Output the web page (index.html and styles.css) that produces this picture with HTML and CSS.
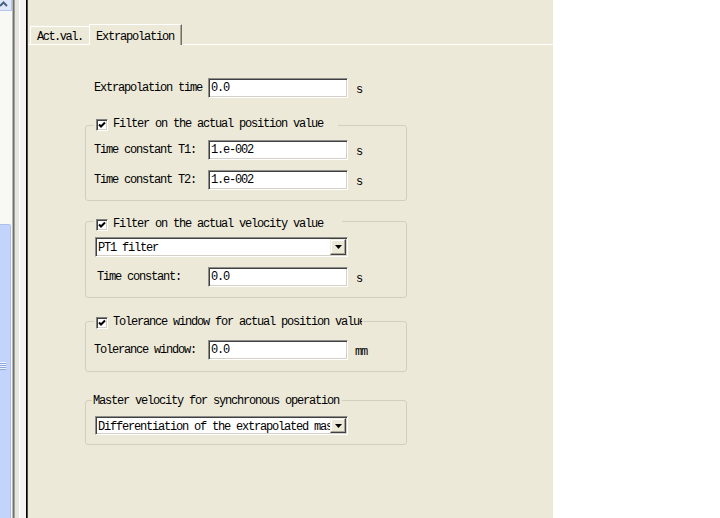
FILE: index.html
```html
<!DOCTYPE html>
<html>
<head>
<meta charset="utf-8">
<title>Extrapolation</title>
<link rel="stylesheet" href="styles.css">
</head>
<body>
<div class="screen">
  <div class="vscroll">
    <div class="sb-btn">
      <svg width="9" height="8" viewBox="0 0 9 8"><polyline points="1,6 4.5,2.5 8,6" fill="none" stroke="#4d6185" stroke-width="2"/></svg>
    </div>
    <div class="sb-track">
      <div class="sb-thumb"><div class="grip"></div></div>
    </div>
  </div>
  <div class="splitter"></div>
  <div class="panel">
    <div class="tabs">
      <div class="tab">Act.val.</div>
      <div class="tab active">Extrapolation</div>
    </div>
    <div class="page">
      <div class="content">
        <div class="row row-top">
          <span class="lbl">Extrapolation time</span>
          <span class="field">0.0</span>
          <span class="unit">s</span>
        </div>

        <div class="group g1">
          <div class="legend legend-1"><span class="check"><svg width="8" height="8" viewBox="0 0 8 8"><path d="M1 3.5 L3 5.5 L7 1.5" fill="none" stroke="#000" stroke-width="2"/></svg></span><span class="legend-text">Filter on the actual position value</span></div>
          <div class="row">
            <span class="lbl">Time constant T1:</span>
            <span class="field">1.e-002</span>
            <span class="unit">s</span>
          </div>
          <div class="row row-gap">
            <span class="lbl">Time constant T2:</span>
            <span class="field">1.e-002</span>
            <span class="unit">s</span>
          </div>
        </div>

        <div class="group g2">
          <div class="legend legend-2"><span class="check"><svg width="8" height="8" viewBox="0 0 8 8"><path d="M1 3.5 L3 5.5 L7 1.5" fill="none" stroke="#000" stroke-width="2"/></svg></span><span class="legend-text">Filter on the actual velocity value</span></div>
          <div class="combo combo-1">
            <span class="combo-text">PT1 filter</span>
            <span class="drop"><svg width="7" height="4" viewBox="0 0 7 4"><polygon points="0,0 7,0 3.5,4" fill="#000"/></svg></span>
          </div>
          <div class="row row-tc">
            <span class="lbl lbl-tc">Time constant:</span>
            <span class="field">0.0</span>
            <span class="unit">s</span>
          </div>
        </div>

        <div class="group g3">
          <div class="legend legend-3"><span class="check"><svg width="8" height="8" viewBox="0 0 8 8"><path d="M1 3.5 L3 5.5 L7 1.5" fill="none" stroke="#000" stroke-width="2"/></svg></span><span class="legend-text">Tolerance window for actual position value</span></div>
          <div class="row">
            <span class="lbl">Tolerance window:</span>
            <span class="field">0.0</span>
            <span class="unit unit-mm">mm</span>
          </div>
        </div>

        <div class="group g4">
          <div class="legend legend-4"><span class="legend-text">Master velocity for synchronous operation</span></div>
          <div class="combo combo-2">
            <span class="combo-text">Differentiation of the extrapolated master value</span>
            <span class="drop"><svg width="7" height="4" viewBox="0 0 7 4"><polygon points="0,0 7,0 3.5,4" fill="#000"/></svg></span>
          </div>
        </div>
      </div>
    </div>
  </div>
</div>
</body>
</html>
```

FILE: styles.css
```css
* { box-sizing: border-box; }
html, body { margin: 0; padding: 0; }
body {
  width: 720px;
  height: 518px;
  overflow: hidden;
  background: #ffffff;
  font-family: "Liberation Mono", "DejaVu Sans Mono", monospace;
  font-size: 12px;
  letter-spacing: -1.2px;
  line-height: 13px;
  color: #000;
}
.screen { display: flex; height: 518px; }

/* left scrollbar */
.vscroll {
  width: 12px;
  flex: none;
  display: flex;
  flex-direction: column;
  background: #f8f8f4;
}
.sb-btn {
  height: 11px;
  flex: none;
  background: #dfe7fb;
  border-right: 1px solid #b4c5ee;
  border-bottom: 1px solid #b4c5ee;
  display: flex;
  align-items: flex-start;
}
.sb-btn svg { display: block; margin-left: -1px; }
.sb-track { flex: 1; padding-top: 213px; display: flex; flex-direction: column; }
.sb-thumb {
  flex: 1;
  width: 11px;
  background: #c3d4fc;
  border-right: 1px solid #a9bdee;
  border-top: 1px solid #aebfec;
  border-radius: 0 2px 0 0;
  padding-top: 137px;
}
.grip {
  width: 6px;
  height: 8px;
  background: repeating-linear-gradient(to bottom, #eef3ff 0 1px, #8ca6e0 1px 2px);
}

.splitter {
  width: 16px;
  flex: none;
  background: linear-gradient(to right,
    #b9b9b2 0 1px, #6f6f6c 1px 2px, #a3a39d 2px 3px,
    #e6e5df 3px 7px, #ffffff 7px 8px, #f5f4f0 8px 14px,
    #000000 14px 15px, #4a4a48 15px 16px);
}

/* panel */
.panel {
  width: 525px;
  flex: none;
  background: #ece9d8;
  display: flex;
  flex-direction: column;
}
.tabs {
  margin-top: 24px;
  height: 21px;
  padding-left: 2px;
  display: flex;
  align-items: flex-end;
  border-bottom: 1px solid #ffffff;
}
.tab {
  height: 18px;
  width: 59px;
  border-top: 1px solid #ffffff;
  border-left: 1px solid #ffffff;
  padding: 4px 0 0 6px;
  white-space: nowrap;
  letter-spacing: -1.5px;
}
.tab.active {
  height: 21px;
  width: 93px;
  margin-bottom: -1px;
  background: #ece9d8;
  padding: 6px 0 0 6px;
  border-right: 1px solid #716f64;
  box-shadow: inset -1px 0 #aca899;
  letter-spacing: -1.2px;
}

.page { flex: 1; }
.content { margin-left: 57px; width: 322px; }

.row {
  height: 20px;
  display: flex;
  align-items: center;
  padding-left: 8px;
  white-space: nowrap;
}
.row-top { margin-top: 33px; padding-left: 9px; }
.lbl { width: 114px; flex: none; padding-top: 1px; }
.row-gap { margin-top: 10px; }
.row-tc { margin-top: 10px; padding-left: 11px; }
.lbl-tc { width: 111px; }

.field {
  width: 140px;
  height: 20px;
  flex: none;
  background: #ffffff;
  border: 1px solid;
  border-color: #8e8e8a #ffffff #ffffff #8e8e8a;
  box-shadow: inset 1px 1px #404040, inset -1px -1px #d4d0c8;
  padding: 3px 0 0 2px;
  white-space: nowrap;
  overflow: hidden;
}
.unit { margin-left: 8px; padding-top: 4px; }
.unit-mm { margin-left: 7px; }

/* group boxes */
.group {
  position: relative;
  border: 1px solid #d0d0bf;
  border-radius: 3px;
}
.g1 { margin-top: 27px; padding: 14px 0 10px; }
.g2 { margin-top: 20px; padding: 15px 0 10px; }
.g3 { margin-top: 23px; padding: 18px 0 11px; }
.g4 { margin-top: 28px; padding: 15px 0 9px; }

.legend {
  position: absolute;
  top: -8px;
  left: 8px;
  height: 13px;
  display: flex;
  align-items: center;
  gap: 5px;
  padding: 0 2px;
  background: #ece9d8;
  white-space: nowrap;
  overflow: hidden;
}
.legend-1 { width: 244px; }
.legend-2 { width: 248px; top: -4px; }
.legend-3 { width: 268px; top: -6px; }
.legend-4 { left: 6px; padding: 0 1px; width: 250px; top: -6px; }
.legend-text { flex: none; }

.check {
  width: 12px;
  height: 12px;
  flex: none;
  background: #ffffff;
  border: 1px solid;
  border-color: #808080 #ffffff #ffffff #808080;
  box-shadow: inset 1px 1px #404040, inset -1px -1px #d4d0c8;
  display: flex;
  align-items: center;
  justify-content: center;
}
.check svg { display: block; }

.combo {
  margin-left: 9px;
  width: 253px;
  height: 20px;
  display: flex;
  background: #ffffff;
  border: 1px solid;
  border-color: #8e8e8a #ffffff #ffffff #8e8e8a;
  box-shadow: inset 1px 1px #404040, inset -1px -1px #d4d0c8;
  padding: 1px;
}
.combo-2 { height: 19px; }
.combo-text {
  flex: 1;
  overflow: hidden;
  white-space: nowrap;
  padding: 3px 0 0 1px;
}
.drop {
  width: 16px;
  flex: none;
  background: #ece9d8;
  border: 1px solid;
  border-color: #f1efe2 #404040 #404040 #f1efe2;
  box-shadow: inset -1px -1px #aca899, inset 1px 1px #ffffff;
  display: flex;
  align-items: center;
  justify-content: center;
}
.drop svg { display: block; }
```
